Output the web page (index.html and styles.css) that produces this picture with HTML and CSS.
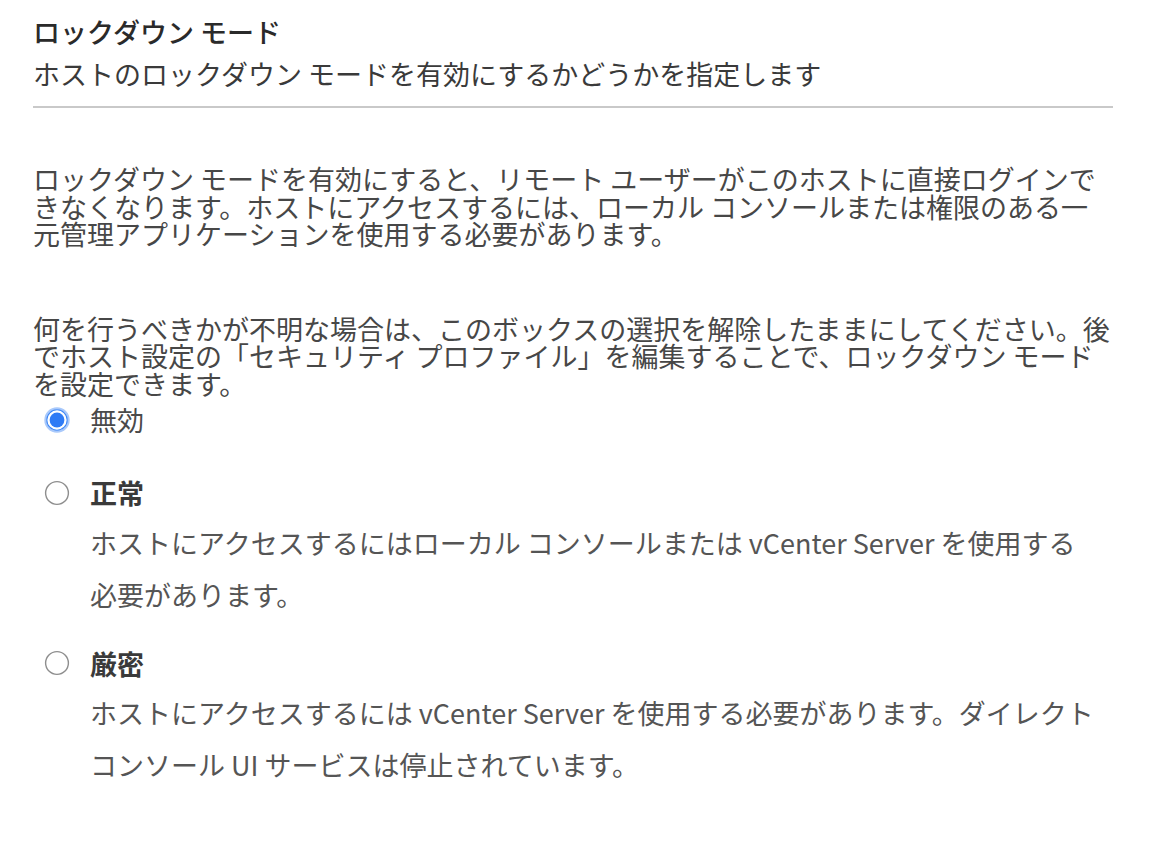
FILE: index.html
```html
<!DOCTYPE html>
<html lang="ja">
<head>
<meta charset="utf-8">
<title>ロックダウン モード</title>
<link rel="stylesheet" href="styles.css">
</head>
<body>
<main class="panel">
  <header class="panel-header">
    <h1 class="panel-title">ロックダウン モード</h1>
    <p class="panel-subtitle">ホストのロックダウン モードを有効にするかどうかを指定します</p>
  </header>
  <div class="divider"></div>
  <section class="panel-body">
    <p class="para">ロックダウン モードを有効にすると、リモート ユーザーがこのホストに直接ログインで<br>きなくなります。ホストにアクセスするには、ローカル コンソールまたは権限のある一<br>元管理アプリケーションを使用する必要があります。</p>
    <p class="para para-second">何を行うべきかが不明な場合は、このボックスの選択を解除したままにしてください。後<br>でホスト設定の「セキュリティ プロファイル」を編集することで、ロックダウン モード<br>を設定できます。</p>
    <div class="options">
      <div class="option option-plain">
        <div class="option-row">
          <svg class="radio" viewBox="0 0 26 26" width="26" height="26" aria-hidden="true">
            <circle cx="13" cy="13" r="11.6" fill="none" stroke="#a9c9fb" stroke-width="2.2"/>
            <circle cx="13" cy="13" r="10.2" fill="#fff" stroke="#3f88f6" stroke-width="1.1"/>
            <circle cx="13" cy="13" r="7.4" fill="#2f7bf5"/>
          </svg>
          <span class="option-label option-label-light">無効</span>
        </div>
      </div>
      <div class="option">
        <div class="option-row">
          <svg class="radio" viewBox="0 0 26 26" width="26" height="26" aria-hidden="true">
            <circle cx="13" cy="13" r="11.4" fill="#fff" stroke="#8e8e8e" stroke-width="1.4"/>
          </svg>
          <span class="option-label">正常</span>
        </div>
        <p class="option-desc">ホストにアクセスするにはローカル コンソールまたは vCenter Server を使用する<br>必要があります。</p>
      </div>
      <div class="option">
        <div class="option-row">
          <svg class="radio" viewBox="0 0 26 26" width="26" height="26" aria-hidden="true">
            <circle cx="13" cy="13" r="11.4" fill="#fff" stroke="#8e8e8e" stroke-width="1.4"/>
          </svg>
          <span class="option-label">厳密</span>
        </div>
        <p class="option-desc">ホストにアクセスするには vCenter Server を使用する必要があります。ダイレクト<br>コンソール UI サービスは停止されています。</p>
      </div>
    </div>
  </section>
</main>
</body>
</html>
```

FILE: styles.css
```css
html, body {
  margin: 0;
  padding: 0;
  background: #ffffff;
}

body {
  font-family: "Noto Sans CJK JP", "Noto Sans", sans-serif;
  font-size: 27px;
  color: #474747;
}

.panel {
  padding: 18px 0 0 33px;
  width: 1120px;
}

.panel-title {
  margin: 0;
  font-size: 27px;
  line-height: 27px;
  font-weight: 500;
  color: #2a2a2a;
}

.panel-subtitle {
  margin: 15px 0 0;
  line-height: 27px;
  color: #3a3a3a;
}

.divider {
  margin-top: 19px;
  height: 2px;
  width: 1080px;
  background: #c9c9c9;
}

.para {
  margin: 57px 0 0;
  line-height: 27.5px;
  color: #474747;
  white-space: nowrap;
}

.para-second {
  margin-top: 67px;
}

.options {
  display: flex;
  flex-direction: column;
  gap: 29px;
  margin-top: 9px;
}

.option-plain {
  padding-bottom: 17px;
}

.option-row {
  display: flex;
  align-items: center;
  gap: 20px;
  height: 27px;
  padding-left: 11px;
}

.radio {
  flex: none;
  display: block;
}

.option-label {
  line-height: 27px;
  font-weight: 700;
  color: #3a3a3a;
}

.option-label-light {
  font-weight: 400;
  color: #4a4a4a;
}

.option-desc {
  margin: 10.5px 0 0;
  padding-left: 57px;
  line-height: 52px;
  color: #555555;
  white-space: nowrap;
}
```
